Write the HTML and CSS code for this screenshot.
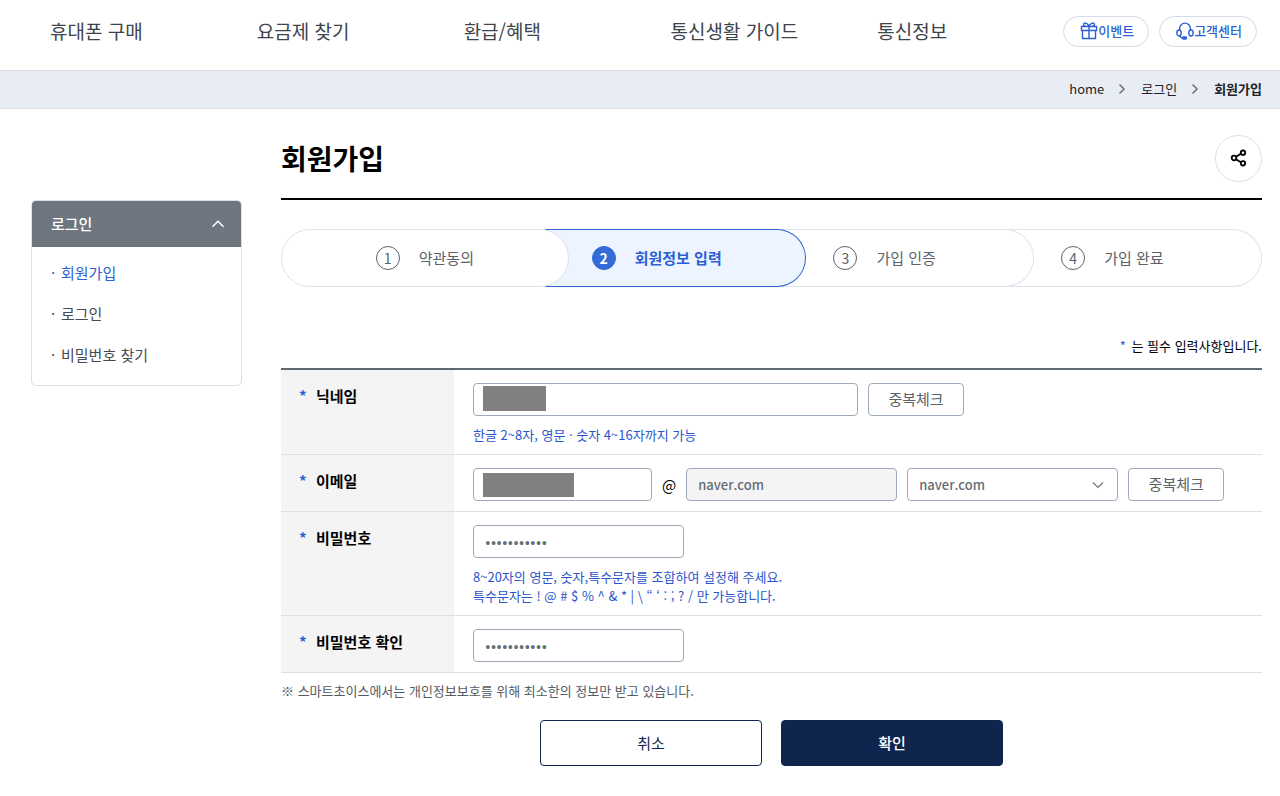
FILE: index.html
```html
<!DOCTYPE html>
<html lang="ko">
<head>
<meta charset="utf-8">
<meta name="viewport" content="width=device-width, initial-scale=1">
<title>회원가입</title>
<link rel="stylesheet" href="styles.css">
</head>
<body>
<header class="header">
  <nav class="gnb" aria-label="주 메뉴">
    <a href="#">휴대폰 구매</a>
    <a href="#">요금제 찾기</a>
    <a href="#">환급/혜택</a>
    <a href="#">통신생활 가이드</a>
    <a href="#">통신정보</a>
  </nav>
  <div class="quick">
    <a class="pill" href="#">
      <svg class="pill-icon" viewBox="0 0 18 18" aria-hidden="true"><path d="M1.500 4.500h15v4h-15zM2.500 8.500v8h13v-8M9 4.500v12M9 4.500C6.500 4.500 3.500 4 3.500 2.300S7.500 0 9 4.500C10.500 0 14.500.600 14.500 2.300S11.500 4.500 9 4.500z"/></svg>
      <span>이벤트</span>
    </a>
    <a class="pill" href="#">
      <svg class="pill-icon" viewBox="0 0 18 18" aria-hidden="true"><path d="M3.600 8.500V6.500a5.400 5.400 0 0 1 10.800 0v2M3.600 13.800c.6 1.500 1.800 2.200 3.400 2.200"/><ellipse cx="3" cy="11" rx="2.200" ry="3"/><ellipse cx="15" cy="11" rx="2.200" ry="3"/><rect class="solid" x="6.500" y="15" width="4" height="2" rx="1"/></svg>
      <span>고객센터</span>
    </a>
  </div>
</header>

<nav class="crumbs" aria-label="현재 위치">
  <a href="#">home</a>
  <svg class="crumb-arrow" viewBox="0 0 8 12" aria-hidden="true"><path d="M1.500 1.500 6 6l-4.500 4.500"/></svg>
  <a href="#">로그인</a>
  <svg class="crumb-arrow" viewBox="0 0 8 12" aria-hidden="true"><path d="M1.500 1.500 6 6l-4.500 4.500"/></svg>
  <strong>회원가입</strong>
</nav>

<div class="page">
  <aside class="side">
    <button class="side-head" type="button" aria-expanded="true">
      <span>로그인</span>
      <svg class="side-arrow" viewBox="0 0 14 8" aria-hidden="true"><path d="M1.500 6.800 7 1.300l5.500 5.500"/></svg>
    </button>
    <ul class="side-list">
      <li><a class="current" href="#">회원가입</a></li>
      <li><a href="#">로그인</a></li>
      <li><a href="#">비밀번호 찾기</a></li>
    </ul>
  </aside>

  <main class="main">
    <div class="title-row">
      <h1>회원가입</h1>
      <button class="share" type="button" aria-label="공유하기">
        <svg viewBox="0 0 18 18" aria-hidden="true"><path d="m6 7.700 5.200-3.200M6 10.300l5.200 3.200"/><circle cx="4" cy="9" r="2.300"/><circle cx="13" cy="3.700" r="2.200"/><circle cx="13" cy="14.300" r="2.200"/></svg>
      </button>
    </div>

    <ol class="steps">
      <li class="step first"><span class="num">1</span><span>약관동의</span></li>
      <li class="step active" aria-current="step"><span class="num">2</span><span>회원정보 입력</span></li>
      <li class="step third"><span class="num">3</span><span>가입 인증</span></li>
      <li class="step"><span class="num">4</span><span>가입 완료</span></li>
    </ol>

    <form>
      <p class="required"><span class="star">*</span> 는 필수 입력사항입니다.</p>
      <table class="form-table">
        <tbody>
          <tr>
            <th scope="row"><label for="nick"><span class="star">*</span>닉네임</label></th>
            <td>
              <div class="fields">
                <span class="masked"><input class="field wide" id="nick" type="text"><span class="mask mask-nick"></span></span>
                <button class="check" type="button">중복체크</button>
              </div>
              <p class="hint">한글 2~8자, 영문 · 숫자 4~16자까지 가능</p>
            </td>
          </tr>
          <tr>
            <th scope="row"><label for="mail"><span class="star">*</span>이메일</label></th>
            <td>
              <div class="fields">
                <span class="masked"><input class="field short" id="mail" type="text"><span class="mask mask-mail"></span></span>
                <span class="at">@</span>
                <input class="field" type="text" value="naver.com" readonly aria-label="이메일 도메인">
                <span class="select-box">
                  <select class="field" aria-label="도메인 선택"><option>naver.com</option></select>
                  <svg class="select-arrow" viewBox="0 0 12 8" aria-hidden="true"><path d="m1 1.500 5 5 5-5"/></svg>
                </span>
                <button class="check" type="button">중복체크</button>
              </div>
            </td>
          </tr>
          <tr>
            <th scope="row"><label for="pw"><span class="star">*</span>비밀번호</label></th>
            <td>
              <div class="fields"><input class="field" id="pw" type="password" value="abcdefghijk"></div>
              <p class="hint">8~20자의 영문, 숫자,특수문자를 조합하여 설정해 주세요.<br>특수문자는 ! @ # $ % ^ &amp; * | \ “ ‘ : ; ? / 만 가능합니다.</p>
            </td>
          </tr>
          <tr>
            <th scope="row"><label for="pw2"><span class="star">*</span>비밀번호 확인</label></th>
            <td>
              <div class="fields"><input class="field" id="pw2" type="password" value="abcdefghijk"></div>
            </td>
          </tr>
        </tbody>
      </table>
      <p class="notice">※ 스마트초이스에서는 개인정보보호를 위해 최소한의 정보만 받고 있습니다.</p>
      <div class="actions">
        <button class="btn" type="button">취소</button>
        <button class="btn primary" type="submit">확인</button>
      </div>
    </form>
  </main>
</div>
</body>
</html>
```

FILE: styles.css
```css
* {
  box-sizing: border-box;
}

body {
  margin: 0;
  background: #fff;
  color: #000;
  font: 15px/22px "Noto Sans CJK KR", sans-serif;
}

a {
  color: inherit;
  text-decoration: none;
}

button,
input,
select {
  font: inherit;
}

svg {
  fill: none;
  stroke: currentColor;
}

p,
h1,
ul,
ol {
  margin: 0;
  padding: 0;
}

ul,
ol {
  list-style: none;
}

/* header */
.header {
  display: flex;
  align-items: center;
  height: 71px;
  padding: 0 23px 8px 50px;
  border-bottom: 1px solid #d9dde2;
}

.gnb {
  flex: 1;
  display: grid;
  grid-template-columns: repeat(4, 1fr) 186px;
  color: #3d444c;
  font-size: 19px;
  line-height: 28px;
}

.quick {
  display: flex;
  gap: 10px;
}

.pill {
  display: flex;
  align-items: center;
  height: 31px;
  padding: 0 14px 0 16px;
  border: 1px solid #d3dbe6;
  border-radius: 16px;
  color: #2b5fd3;
  font-size: 13px;
  font-weight: 500;
}

.pill-icon {
  width: 18px;
  height: 18px;
  stroke-width: 1.4;
}

.pill-icon .solid {
  fill: currentColor;
}

/* breadcrumb */
.crumbs {
  display: flex;
  justify-content: flex-end;
  align-items: center;
  height: 38px;
  padding: 0 18px 2px;
  background: #e8edf5;
  border-bottom: 1px solid #e0e5eb;
  color: #222;
  font-size: 13px;
}

.crumb-arrow {
  width: 8px;
  height: 12px;
  margin: 0 15px 0 14px;
  color: #6b727a;
  stroke-width: 1.5;
}

/* page columns */
.page {
  display: flex;
  align-items: flex-start;
  gap: 39px;
  padding: 0 18px 30px 31px;
}

.side {
  width: 211px;
  margin-top: 91px;
  border: 1px solid #dae0e8;
  border-radius: 5px;
  overflow: hidden;
}

.side-head {
  display: flex;
  justify-content: space-between;
  align-items: center;
  width: 100%;
  height: 46px;
  padding: 0 16px 0 19px;
  border: 0;
  background: #6e7780;
  color: #fff;
  font-weight: 500;
}

.side-arrow {
  width: 14px;
  height: 8px;
  stroke-width: 1.5;
}

.side-list {
  display: grid;
  gap: 19px;
  padding: 15px 19px 19px;
  color: #444b52;
}

.side-list a {
  display: flex;
}

.side-list a::before {
  content: "·";
  width: 10px;
}

.side-list .current {
  color: #2b5fd3;
}

.main {
  flex: 1;
  min-width: 0;
}

.title-row {
  display: flex;
  justify-content: space-between;
  align-items: center;
  height: 91px;
  padding-top: 9px;
  border-bottom: 2px solid #000;
}

h1 {
  font-size: 28px;
  line-height: 40px;
  font-weight: 700;
}

.share {
  display: grid;
  place-items: center;
  width: 47px;
  height: 47px;
  padding: 0;
  border: 1px solid #d9e0e9;
  border-radius: 50%;
  background: #fff;
  color: #000;
}

.share svg {
  width: 18px;
  height: 18px;
  stroke-width: 1.8;
}

/* progress steps */
.steps {
  display: flex;
  margin-top: 29px;
  color: #5a626b;
}

.step {
  position: relative;
  flex: 1 1 252px;
  display: flex;
  align-items: center;
  gap: 19px;
  height: 58px;
  margin-left: -24px;
  padding-left: 51px;
  border: 1px solid #dde3ea;
  border-left: 0;
  border-radius: 0 29px 29px 0;
  background: #fff;
}

.step.first {
  z-index: 3;
  flex-basis: 288px;
  justify-content: center;
  margin-left: 0;
  padding-left: 0;
  border-left: 1px solid #dde3ea;
  border-radius: 29px;
}

.step.active {
  z-index: 2;
  flex-basis: 262px;
  padding-left: 47px;
  border-color: #2f66cf;
  background: #edf4ff;
  color: #2b5fd3;
  font-weight: 700;
}

.step.third {
  z-index: 1;
}

.num {
  display: grid;
  place-items: center;
  width: 24px;
  height: 24px;
  border: 1px solid #5a626b;
  border-radius: 50%;
  font-size: 14px;
  line-height: 20px;
}

.active .num {
  border-color: #346bd8;
  background: #346bd8;
  color: #fff;
}

/* form */
.star {
  color: #2b5fd3;
}

.required {
  margin: 49px 0 12px;
  font-size: 13px;
  line-height: 20px;
  text-align: right;
}

.required .star {
  margin-right: 2px;
}

.form-table {
  width: 100%;
  border-top: 2px solid #606972;
  border-spacing: 0;
}

.form-table th,
.form-table td {
  border-bottom: 1px solid #dae0e8;
  text-align: left;
  vertical-align: top;
}

.form-table th {
  width: 173px;
  padding: 15px 0 0 18px;
  background: #f4f4f4;
  font-weight: 700;
}

th .star {
  display: inline-block;
  width: 17px;
}

.form-table td {
  padding: 13px 0 10px 19px;
}

.fields {
  display: flex;
  align-items: center;
  gap: 10px;
}

.field {
  display: block;
  width: 211px;
  height: 33px;
  padding: 0 11px;
  border: 1px solid #9eabba;
  border-radius: 4px;
  background: #fff;
  color: #666d75;
  font-size: 13px;
  font-weight: 500;
}

.field.wide {
  width: 385px;
}

.field.short {
  width: 179px;
}

.field:read-only:not(select) {
  background: #f4f4f4;
}

.field[type="password"] {
  font-family: "Noto Sans", sans-serif;
  font-size: 15px;
}

.masked,
.select-box {
  position: relative;
}

.mask {
  position: absolute;
  left: 10px;
  background: #808080;
}

.mask-nick {
  top: 3px;
  width: 63px;
  height: 25px;
}

.mask-mail {
  top: 5px;
  width: 91px;
  height: 24px;
}

.select-box select {
  appearance: none;
}

.select-arrow {
  position: absolute;
  top: 13px;
  right: 14px;
  width: 12px;
  height: 8px;
  color: #6b747e;
  stroke-width: 1.2;
  pointer-events: none;
}

.check {
  width: 96px;
  height: 33px;
  padding: 0 0 2px;
  border: 1px solid #9eabba;
  border-radius: 4px;
  background: #fff;
  color: #5a626b;
}

.hint {
  margin-top: 9px;
  color: #2b55cc;
  font-size: 13px;
  line-height: 19px;
}

.notice {
  margin-top: 8px;
  color: #555c63;
  font-size: 13px;
  line-height: 20px;
}

.actions {
  display: flex;
  justify-content: center;
  gap: 19px;
  margin-top: 19px;
}

.btn {
  width: 222px;
  height: 46px;
  border: 1px solid #10254d;
  border-radius: 4px;
  background: #fff;
  color: #10254d;
}

.btn.primary {
  background: #10254d;
  color: #fff;
  font-weight: 500;
}
```
